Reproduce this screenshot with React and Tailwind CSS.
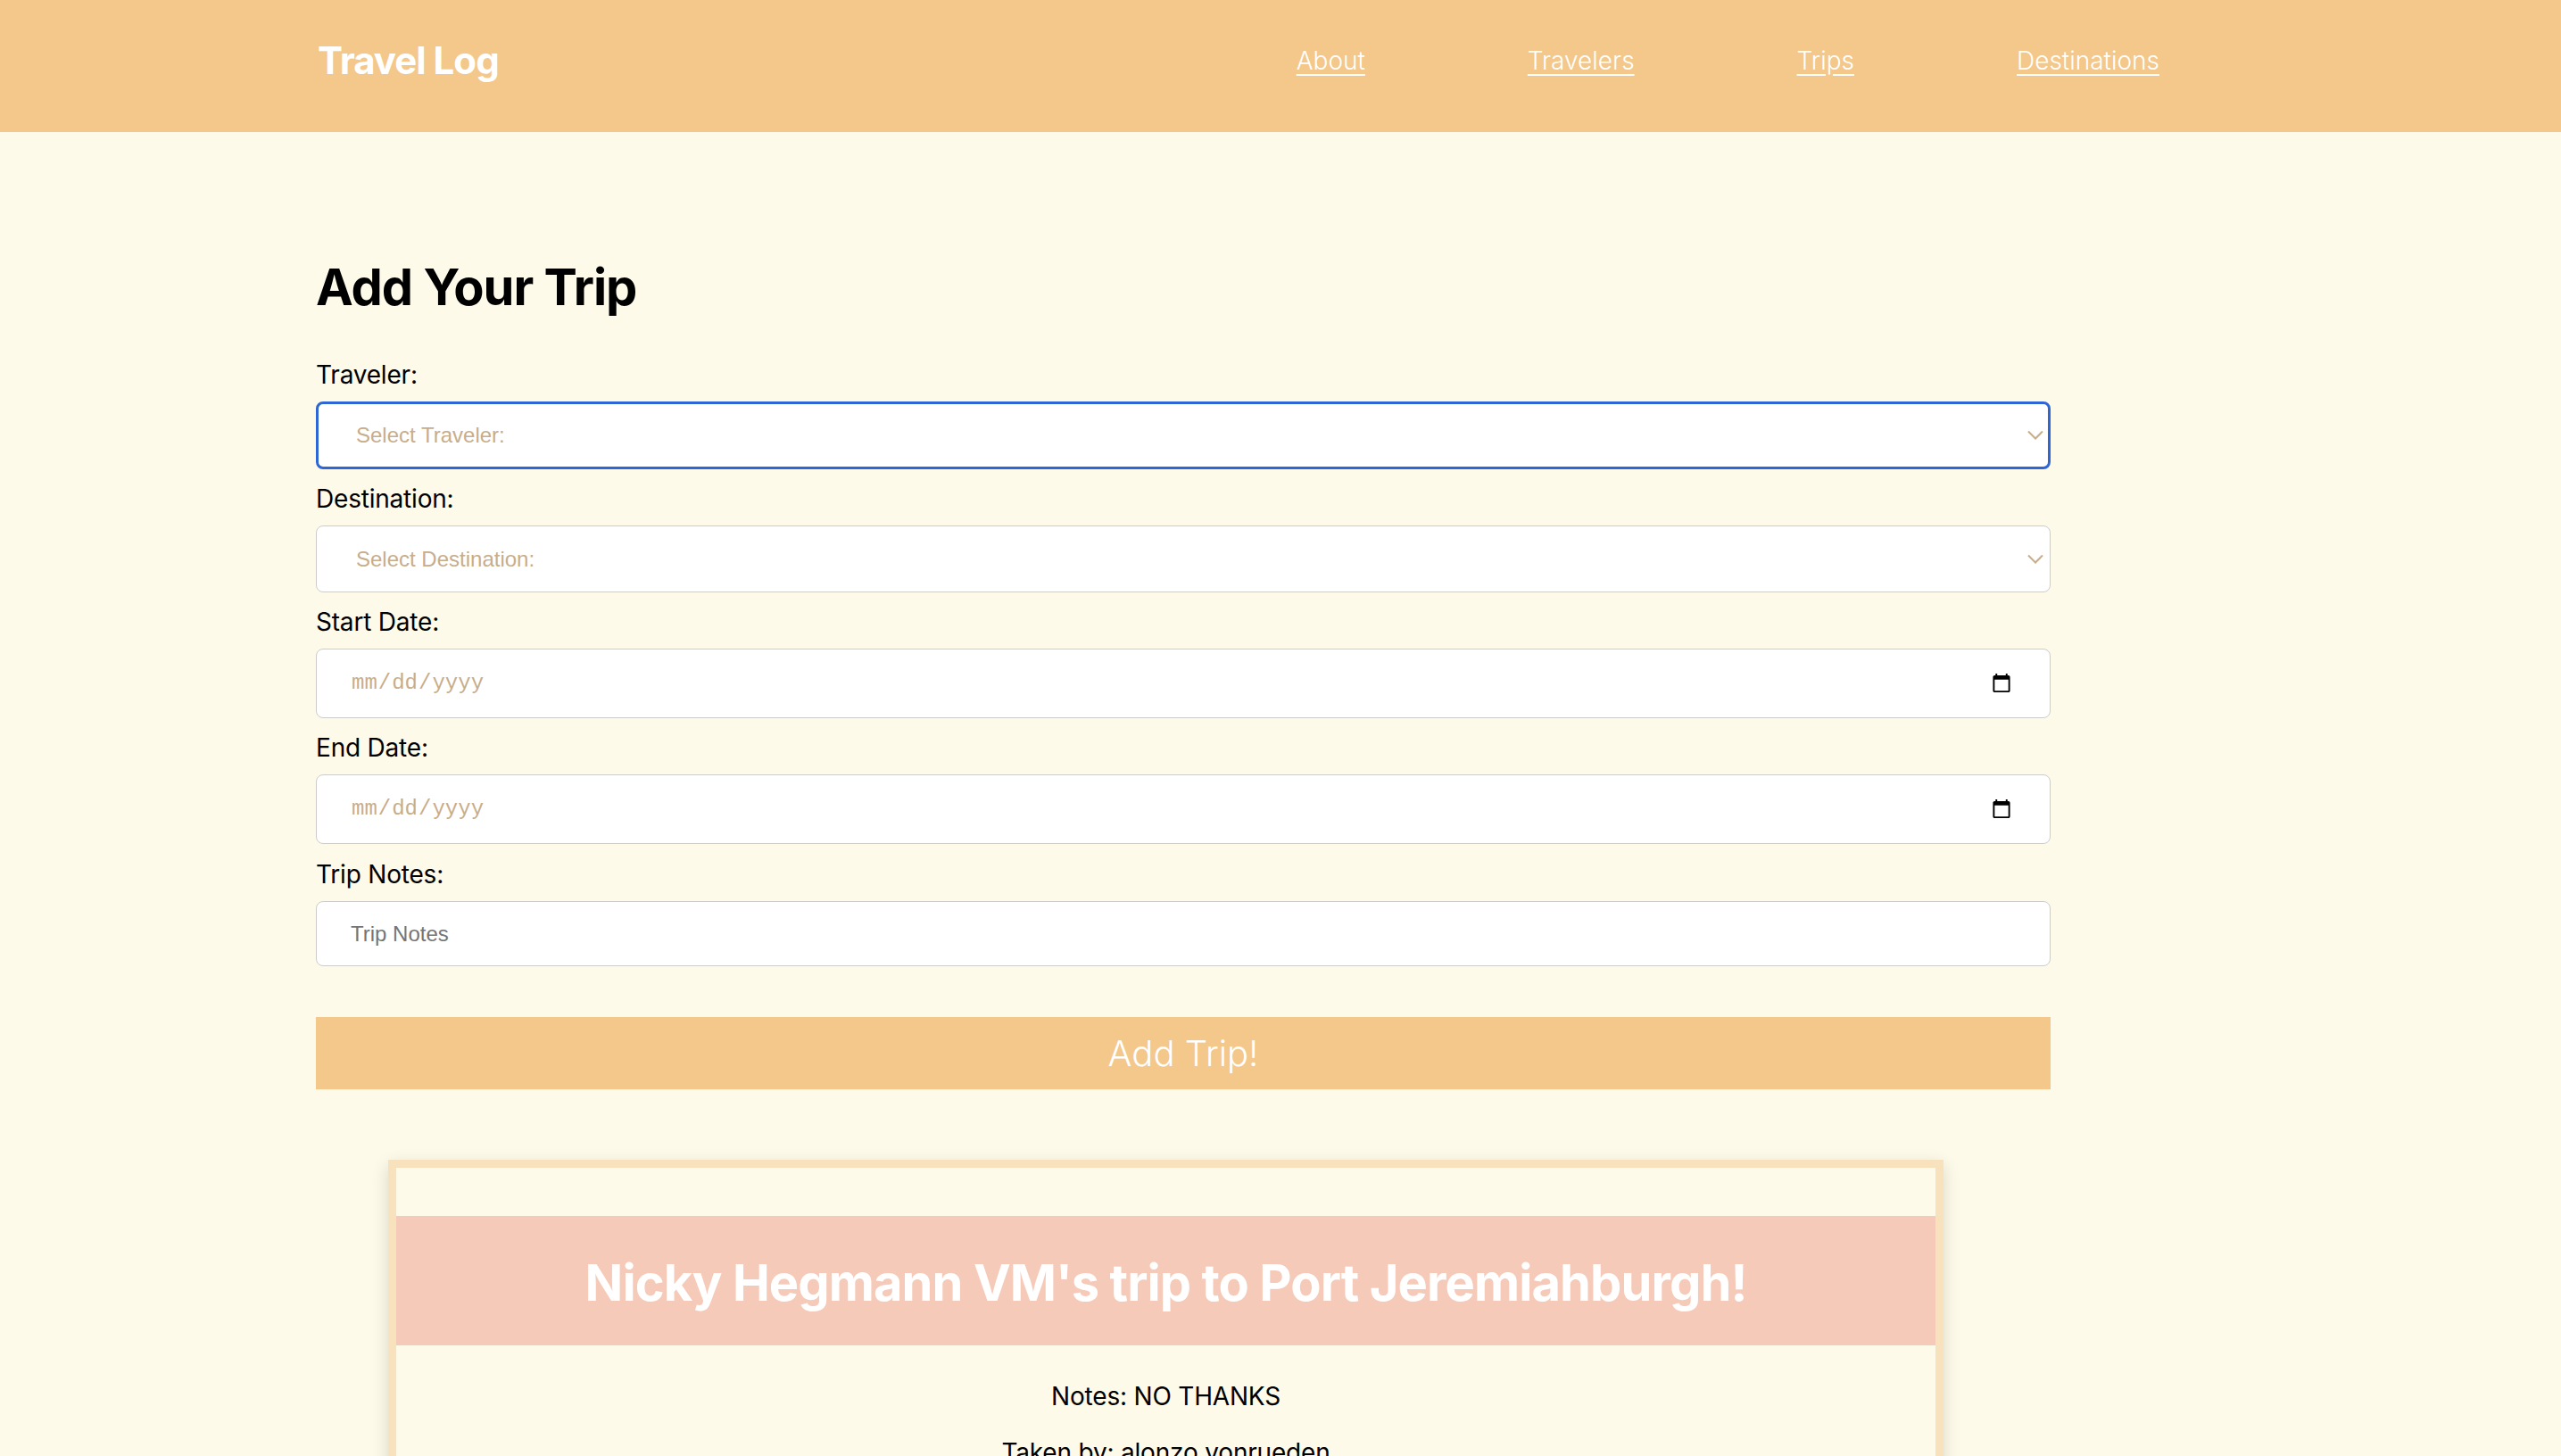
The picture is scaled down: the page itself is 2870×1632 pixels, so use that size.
import React from "react";

const inter = { fontFamily: "Inter, 'Noto Sans', sans-serif" };

const Chevron = () => (
  <svg
    className="pointer-events-none absolute right-[8px] top-1/2 -translate-y-1/2"
    width="18"
    height="11"
    viewBox="0 0 18 11"
    fill="none"
  >
    <path d="M1 1l8 8 8-8" stroke="#c8ad8a" strokeWidth="2" />
  </svg>
);

const Label = ({ children }) => (
  <label className="block text-[28px] leading-[34px] mb-[13px] text-black tracking-[-0.2px]">{children}</label>
);

const App = () => {
  return (
    <div className="min-h-screen bg-[#fefae9] text-black" style={inter}>
      <header className="bg-[#f3c88a] h-[148px]">
        <div className="w-[2162px] mx-auto h-full flex items-center pb-[13px] pr-[96px]">
          <h1 className="text-[42px] font-bold text-white leading-none tracking-[-1px] pl-[2px]">Travel Log</h1>
          <nav className="ml-auto flex gap-[182px] text-[28px] font-light text-white">
            <a href="#" className="underline underline-offset-[5px]">About</a>
            <a href="#" className="underline underline-offset-[5px]">Travelers</a>
            <a href="#" className="underline underline-offset-[5px]">Trips</a>
            <a href="#" className="underline underline-offset-[5px]">Destinations</a>
          </nav>
        </div>
      </header>

      <main className="w-[2162px] mx-auto pb-[120px]">
        <h2 className="mt-[140px] text-[56px] leading-[68px] font-bold tracking-[-1px]">Add Your Trip</h2>

        <form className="w-[1944px] mt-[47px]" onSubmit={(e) => e.preventDefault()}>
          <Label>Traveler:</Label>
          <div className="relative mb-[16px]">
            <select
              defaultValue=""
              className="appearance-none w-full h-[76px] bg-white border-[3px] border-[#2e66d3] rounded-[8px] pl-[42px] text-[24px] text-[#c8ad8a] outline-none"
              style={{ fontFamily: "'Liberation Sans', Arial, sans-serif" }}
            >
              <option value="" disabled>Select Traveler:</option>
              <option value="1">Nicky Hegmann VM</option>
            </select>
            <Chevron />
          </div>

          <Label>Destination:</Label>
          <div className="relative mb-[16px]">
            <select
              defaultValue=""
              className="appearance-none w-full h-[75px] bg-white border border-[#cccccc] rounded-[8px] pl-[44px] text-[24px] text-[#c8ad8a] outline-none"
              style={{ fontFamily: "'Liberation Sans', Arial, sans-serif" }}
            >
              <option value="" disabled>Select Destination:</option>
              <option value="1">Port Jeremiahburgh</option>
            </select>
            <Chevron />
          </div>

          <Label>Start Date:</Label>
          <input
            type="date"
            className="block w-full h-[78px] mb-[16px] bg-white border border-[#cccccc] rounded-[8px] pl-[38px] pr-[40px] text-[24px] text-[#c8ad8a] outline-none [color-scheme:light]"
            style={{ fontFamily: "'Liberation Mono', 'Courier New', monospace" }}
          />

          <Label>End Date:</Label>
          <input
            type="date"
            className="block w-full h-[78px] mb-[17px] bg-white border border-[#cccccc] rounded-[8px] pl-[38px] pr-[40px] text-[24px] text-[#c8ad8a] outline-none [color-scheme:light]"
            style={{ fontFamily: "'Liberation Mono', 'Courier New', monospace" }}
          />

          <Label>Trip Notes:</Label>
          <input
            type="text"
            placeholder="Trip Notes"
            className="block w-full h-[73px] bg-white border border-[#cccccc] rounded-[8px] px-[38px] text-[24px] text-black placeholder:text-[#757575] outline-none"
            style={{ fontFamily: "'Liberation Sans', Arial, sans-serif" }}
          />

          <button
            type="submit"
            className="mt-[57px] w-full h-[81px] bg-[#f3c88a] text-white text-[40px] font-light"
          >
            Add Trip!
          </button>
        </form>

        <div className="mt-[79px] ml-[81px] w-[1743px] border-[9px] border-[#f7e2bd] bg-[#fefae9] pt-[54px] pb-[40px] shadow-[0_6px_18px_rgba(0,0,0,0.14)]">
          <div className="h-[145px] bg-[#f6cab8] flex items-center justify-center">
            <h3 className="text-[56px] font-bold text-white leading-none pt-[4px] tracking-[-0.9px]">
              Nicky Hegmann VM's trip to Port Jeremiahburgh!
            </h3>
          </div>
          <div className="pt-[40px] text-center text-[28px] leading-[34px] tracking-[-0.2px]">
            <p>Notes: NO THANKS</p>
            <p className="mt-[29px]">Taken by: alonzo.vonrueden</p>
          </div>
        </div>
      </main>
    </div>
  );
};

export default App;
